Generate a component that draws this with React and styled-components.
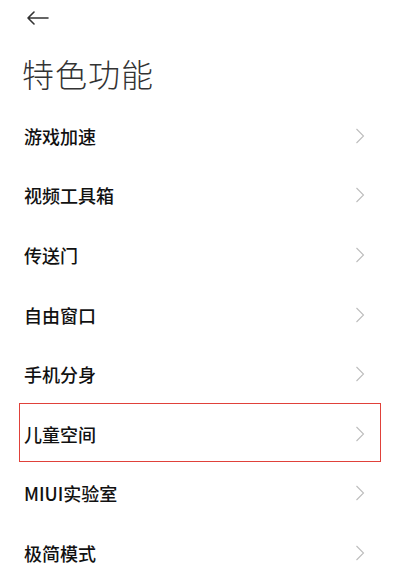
import styled, { createGlobalStyle } from "styled-components";

const GlobalStyle = createGlobalStyle`
  body {
    margin: 0;
    background: #fff;
    font-family: "Noto Sans CJK SC", "Noto Sans", sans-serif;
  }
`;

const Page = styled.div`
  // .page
  width: 393px;
  height: 584px;
  overflow: hidden;
  background: #fff;
`;

const TopBar = styled.div`
  // .top-bar
  height: 36px;
  display: flex;
  align-items: center;
  padding-left: 26px;
`;

const Title = styled.h1`
  // .title
  margin: 0;
  padding: 17px 0 13px 22px;
  font-size: 32px;
  line-height: 40px;
  font-weight: 300;
  letter-spacing: 1px;
  color: #333;
`;

const List = styled.ul`
  // .list
  list-style: none;
  margin: 0;
  padding: 0;
`;

const Row = styled.li`
  // .row
  position: relative;
  height: 59.6px;
  display: flex;
  align-items: center;
  justify-content: space-between;
  padding: 0 28px 0 24px;

  ${({ $highlight }) =>
    $highlight &&
    `
    &::after {
      content: "";
      position: absolute;
      top: -1px;
      bottom: 2px;
      left: 19px;
      right: 12px;
      border: 1px solid #e0413a;
      pointer-events: none;
    }
  `}
`;

const Label = styled.span`
  // .row-label
  font-size: 18px;
  font-weight: 500;
  color: #111;
`;

const Chevron = () => (
  <svg width="10" height="16" viewBox="0 0 10 16" fill="none">
    <path d="M1.5 1 L8.5 8 L1.5 15" stroke="#bdbdbd" strokeWidth="1.1" />
  </svg>
);

const BackArrow = () => (
  <svg width="23" height="14" viewBox="0 0 23 14" fill="none">
    <path
      d="M22 7 H2 M8 1 L2 7 L8 13"
      stroke="#333"
      strokeWidth="1.6"
      strokeLinecap="round"
      strokeLinejoin="round"
    />
  </svg>
);

const items = [
  "游戏加速",
  "视频工具箱",
  "传送门",
  "自由窗口",
  "手机分身",
  "儿童空间",
  "MIUI实验室",
  "极简模式",
];

export default function App() {
  return (
    <Page>
      <GlobalStyle />
      <TopBar>
        <BackArrow />
      </TopBar>
      <Title>特色功能</Title>
      <List>
        {items.map((item) => (
          <Row key={item} $highlight={item === "儿童空间"}>
            <Label>{item}</Label>
            <Chevron />
          </Row>
        ))}
      </List>
    </Page>
  );
}
